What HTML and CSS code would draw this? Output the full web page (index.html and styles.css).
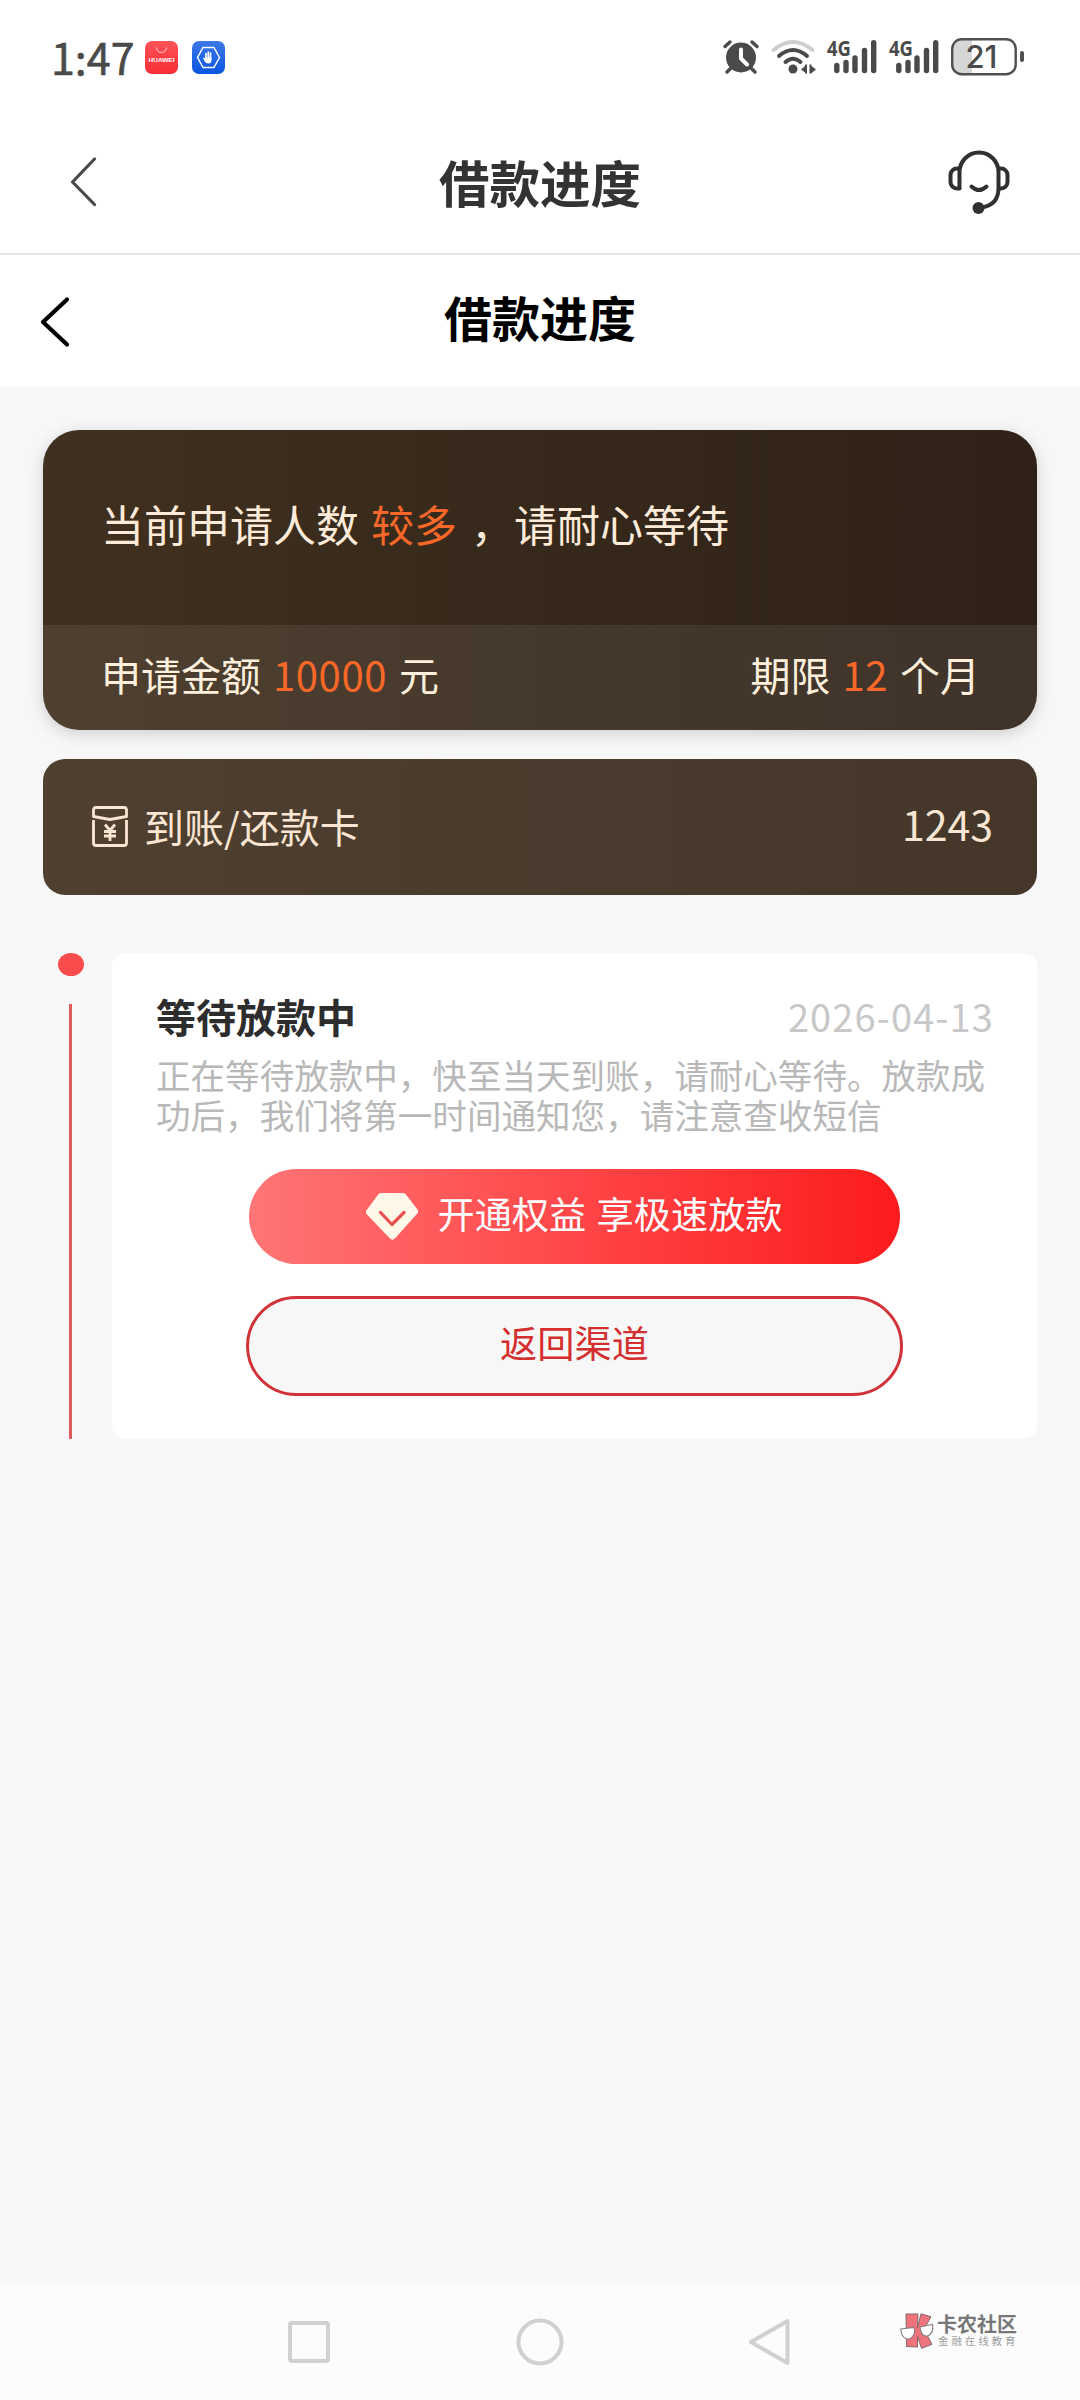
FILE: index.html
```html
<!DOCTYPE html>
<html lang="zh-CN">
<head>
<meta charset="utf-8">
<title>借款进度</title>
<link rel="stylesheet" href="styles.css">
</head>
<body>
<div class="screen">
  <div class="status">
    <span class="clock">1:47</span>
    <svg class="app" viewBox="0 0 33 33"><defs><linearGradient id="r" x2="0" y2="1"><stop stop-color="#fd5458"/><stop offset="1" stop-color="#f92d35"/></linearGradient><linearGradient id="b" x2="0" y2="1"><stop stop-color="#3d78e6"/><stop offset="1" stop-color="#0b55e2"/></linearGradient></defs><rect width="33" height="33" rx="7" fill="url(#r)"/><path d="M11.500 6.500a5 5 0 0 0 10 0" fill="none" stroke="#ffd0d0" stroke-width="1"/><text x="16.500" y="21" text-anchor="middle" class="brand" textLength="26" lengthAdjust="spacingAndGlyphs">HUAWEI</text></svg>
    <svg class="app second" viewBox="0 0 33 33"><rect width="33" height="33" rx="7" fill="url(#b)"/><path d="M11 6.500h11l5.500 10-5.500 10H11l-5.500-10z" fill="none" stroke="#fff" stroke-width="1.500" stroke-linejoin="round"/><path d="M14 18v-5.500M16.300 17v-6M18.500 17.500v-5.500M12 17.500l2.500 3" stroke="#fff" stroke-width="1.700" stroke-linecap="round"/><path d="M13.200 16.500h6.300v3q0 3-3 3t-4.500-3.500z" fill="#fff"/></svg>
    <div class="system">
      <svg class="alarm" viewBox="0 0 36 34"><g stroke="#4a4a4a" stroke-width="3.400" stroke-linecap="round"><path d="M2 6.500L7 2M34 6.500L29 2M8 28l-4 4M28 28l4 4"/></g><circle cx="18" cy="17.500" r="15" fill="#4a4a4a"/><path d="M18 9.500v9l6 6" fill="none" stroke="#fff" stroke-width="4" stroke-linecap="round" stroke-linejoin="round"/></svg>
      <svg class="wifi" viewBox="0 0 45 34"><g fill="none" stroke-width="4" stroke-linecap="round"><path d="M2.500 10Q22-6 41.500 10" stroke="#cfcfcf"/><path d="M8 16q14-12 28 0M14.500 22q7.500-6.500 15 0" stroke="#4a4a4a"/></g><circle cx="22" cy="29" r="4.500" fill="#4a4a4a"/><path d="M30 29.500l4-3.500V24.500h2v9h-2V32.500zM45 29.500l-4.500 3.500v.5h-2v-9h2v1.500z" fill="#4a4a4a"/></svg>
      <svg class="signal" viewBox="0 0 50 34"><text x="0" y="15.500" class="net" textLength="24" lengthAdjust="spacingAndGlyphs">4G</text><path d="M9.800 25.500v5M19 22.500v8M28 18v12.500M37.500 10.500v20M46.700 2.700v27.800" stroke="#4a4a4a" stroke-width="5.400" stroke-linecap="round"/></svg>
      <svg class="signal" viewBox="0 0 50 34"><text x="0" y="15.500" class="net" textLength="24" lengthAdjust="spacingAndGlyphs">4G</text><path d="M9.800 25.500v5M19 22.500v8M28 18v12.500M37.500 10.500v20M46.700 2.700v27.800" stroke="#4a4a4a" stroke-width="5.400" stroke-linecap="round"/></svg>
      <svg class="battery" viewBox="0 0 74 38"><path d="M21 1.500H11A9.500 9.500 0 0 0 1.500 11v15.500a9.500 9.500 0 0 0 9.500 9.500h10z" fill="#d6d6d6"/><rect x="1.200" y="1.200" width="63.500" height="35" rx="9.500" fill="none" stroke="#4f4f4f" stroke-width="2.400"/><rect x="69" y="13" width="4" height="11" rx="2" fill="#4f4f4f"/><text x="30.500" y="30" text-anchor="middle" class="level">21</text></svg>
    </div>
  </div>
  <header class="appbar">
    <svg class="back" viewBox="0 0 27 50"><path d="M24.500 2L2.500 25l22 22.500" fill="none" stroke="#484848" stroke-width="3.200" stroke-linecap="round" stroke-linejoin="round"/></svg>
    <h1>借款进度</h1>
    <svg class="service" viewBox="0 0 62 65"><g fill="none" stroke="#303030" stroke-width="4" stroke-linecap="round"><path d="M11.500 38V22a19.500 19.500 0 0 1 39 0v16q0 17-17 19.500"/><path d="M11.500 38.500H9A6.500 6.500 0 0 1 2.500 32v-7A6.500 6.500 0 0 1 9 18.500h2.500M51 18.500h2a6.500 6.500 0 0 1 6.500 6.500v7a6.500 6.500 0 0 1-6.500 6.500h-2M23.500 36.500q7.500 7 15 0"/></g><circle cx="30.500" cy="58" r="6" fill="#303030"/></svg>
  </header>
  <header class="pagebar">
    <svg class="back" viewBox="0 0 30 50"><path d="M27 2.500L3 25l24 22.500" fill="none" stroke="#000" stroke-width="4.200" stroke-linecap="round" stroke-linejoin="round"/></svg>
    <h2>借款进度</h2>
  </header>
  <main>
    <section class="summary">
      <p class="notice">当前申请人数<em>较多</em><span>，请耐心等待</span></p>
      <div class="terms">
        <p>申请金额<em>10000</em>元</p>
        <p>期限<em>12</em>个月</p>
      </div>
    </section>
    <section class="bank">
      <svg viewBox="0 0 36 41"><g fill="none" stroke="#fbe6d3" stroke-width="2.800" stroke-linejoin="round"><path d="M1.500 10.500V4q0-2.500 2.500-2.500h28q2.500 0 2.500 2.500v6.500l-16.500 3z"/><path d="M1.500 14v23q0 2.500 2.500 2.500h28q2.500 0 2.500-2.500V14"/><path d="M13 18.500l5 6 5-6M18 24.500V35M12 25.500h12M12 30h12"/></g></svg>
      <span>到账/还款卡</span>
      <b>1243</b>
    </section>
    <section class="timeline">
      <div class="rail"><i class="dot"></i><i class="line"></i></div>
      <article>
        <div class="head"><h3>等待放款中</h3><time>2026-04-13</time></div>
        <p>正在等待放款中，快至当天到账，请耐心等待。放款成功后，我们将第一时间通知您，请注意查收短信</p>
        <button class="primary"><svg viewBox="0 0 52 47"><path d="M15 3.500h22L48.500 18.500 26.500 43 3.500 19z" fill="#fff8e8" stroke="#fff8e8" stroke-width="7" stroke-linejoin="round"/><path d="M14.500 19.500L26 31.500l12-12" fill="none" stroke="#e8514e" stroke-width="3.200" stroke-linecap="round" stroke-linejoin="round"/></svg><span>开通权益 享极速放款</span></button>
        <button class="secondary">返回渠道</button>
      </article>
    </section>
  </main>
  <nav>
    <svg viewBox="0 0 50 50"><rect x="6" y="6" width="38" height="38" rx="2" /></svg>
    <svg viewBox="0 0 50 50"><circle cx="25" cy="25" r="21.500"/></svg>
    <svg viewBox="0 0 50 50"><path d="M42.500 4v42L6 25z"/></svg>
  </nav>
  <div class="mark">
    <svg viewBox="0 0 34 36"><g fill="#ee737c" stroke="#85696c" stroke-width="1"><path d="M6 1h12l-.5 14L21 .8l10 3-7 12.500 8 15-10.500 4-4-12V34l-11-.5z"/></g><g fill="#fff" stroke="#8a8080" stroke-width="1.200"><path d="M.8 16l13-1.500q2 4-.5 8t-6 3.500q-6-1-6.500-10zM20 14l12.500-2.500q1.500 9-5 11.500-6.500 1-7.500-9z"/></g></svg>
    <div><strong>卡农社区</strong><small>金融在线教育</small></div>
  </div>
</div>
</body>
</html>
```
FILE: styles.css
```css
* { box-sizing: border-box; margin: 0; padding: 0; }
body { font-family: "Noto Sans CJK SC", sans-serif; background: #f7f7f7; }
svg { display: block; flex: none; overflow: visible; }
em, i { font-style: normal; }
.screen { position: relative; width: 1080px; height: 2400px; display: flex; flex-direction: column; overflow: hidden; background: #f7f7f7; }

.status { height: 110px; padding: 38px 55px 0 51px; display: flex; align-items: flex-start; background: #fff; }
.clock { width: 94px; font-size: 43px; line-height: 36px; color: #4a4a4a; -webkit-text-stroke: .6px #4a4a4a; }
.app { width: 33px; height: 33px; margin-top: 3px; }
.second { margin-left: 14px; }
.brand { font: bold 5.500px "Liberation Sans", sans-serif; fill: #fff; }
.system { margin-left: auto; display: flex; }
.alarm { width: 36px; height: 34px; margin: 2px 12px 0 0; }
.wifi { width: 45px; height: 34px; margin: 2px 11px 0 0; }
.signal { width: 50px; height: 34px; margin: 2px 12px 0 0; }
.battery { width: 74px; height: 38px; }
.net { font: bold 21.500px "Noto Sans", sans-serif; fill: #4a4a4a; }
.level { font: 500 31px Inter, sans-serif; fill: #4a4a4a; }

.appbar { height: 145px; padding: 0 70px; display: flex; align-items: center; justify-content: space-between; background: #fff; border-bottom: 2px solid #e5e5e5; }
.appbar .back { width: 27px; height: 50px; }
.appbar h1 { font-size: 50.500px; line-height: 60px; color: #333; margin-left: 35px; padding-bottom: 1px; }
.service { width: 62px; height: 65px; margin-top: 2px; }
.pagebar { height: 132px; padding: 0 40px; display: flex; align-items: center; background: #fff; }
.pagebar .back { width: 30px; height: 50px; margin-top: 2px; }
.pagebar h2 { flex: 1; margin-right: 30px; padding-bottom: 10px; text-align: center; font-size: 48px; line-height: 60px; color: #000; }

main { flex: 1; padding: 43px 43px 0; }
.summary { height: 300px; border-radius: 36px; overflow: hidden; display: flex; flex-direction: column; background: linear-gradient(90deg, #40301f, #36291b 50%, #2f2118); box-shadow: 0 4px 16px rgba(0,0,0,.16); color: #ffebd9; }
.notice { height: 195px; padding: 60px 58px 0; font-size: 43px; line-height: 66px; white-space: nowrap; }
.notice em { margin: 0 14px 0 12px; }
.summary em { color: #f96828; }
.terms { flex: 1; padding: 0 57px 0 58px; display: flex; justify-content: space-between; line-height: 99px; font-size: 40px; color: #fff0de; background: rgba(255,255,255,.08); }
.terms em { letter-spacing: .6px; margin: 0 12px; }
.bank { height: 136px; margin-top: 29px; padding: 0 44px 0 49px; border-radius: 22px; display: flex; align-items: center; font-size: 40px; line-height: 60px; color: #fbe6d3; background: linear-gradient(90deg, #4f4030, #44372a); }
.bank svg { width: 36px; height: 41px; margin-bottom: 1px; }
.bank span { margin-left: 16px; padding-bottom: 3px; }
.bank b { margin-left: auto; font-weight: 400; font-size: 41px; padding-bottom: 9px; }

.timeline { display: flex; height: 486px; margin-top: 58px; }
.rail { width: 69px; padding-left: 15px; display: flex; flex-direction: column; }
.dot { width: 26px; height: 23px; border-radius: 50%; background: #fa4c4c; }
.line { width: 3px; flex: 1; margin: 28px 0 0 11px; background: #dc5c5c; }
article { flex: 1; padding: 35px 44px 0; border-radius: 14px; background: #fff; display: flex; flex-direction: column; align-items: center; }
.head { width: 100%; height: 66px; display: flex; justify-content: space-between; line-height: 56px; }
h3 { font-size: 40px; color: #2d2d2d; }
time { font-size: 38px; letter-spacing: 1.100px; margin-right: -1px; color: #c8c8c8; }
article p { width: 100%; font-size: 34.560px; line-height: 40px; height: 115px; color: #b8b8b8; white-space: normal; }
button { font: 37.200px/1 "Noto Sans CJK SC", sans-serif; border: 0; flex: none; }
.primary { width: 651px; height: 95px; border-radius: 48px; display: flex; justify-content: center; align-items: center; gap: 19px; color: #fff; background: linear-gradient(90deg, #ff7575, #ff4648 50%, #fc1b1c); }
.primary svg { width: 52px; height: 47px; }
.primary span { padding-bottom: 6px; word-spacing: 2px; }
.secondary { width: 657px; height: 100px; margin-top: 32px; padding-bottom: 6px; border: 3px solid #d03238; border-radius: 50px; color: #d42e2e; background: #f7f7f7; }

nav { height: 117px; padding: 0 285px 0 284px; display: flex; justify-content: space-between; align-items: center; background: #fcfcfc; }
nav svg { width: 50px; height: 50px; fill: none; stroke: #d0d0d0; stroke-width: 4; stroke-linejoin: round; }
.mark { position: absolute; left: 900px; top: 2313px; display: flex; gap: 3px; }
.mark svg { width: 34px; height: 36px; }
.mark div { display: flex; flex-direction: column; }
.mark strong { font-size: 20px; line-height: 21px; color: #777; }
.mark small { margin-top: 1px; font-size: 10.500px; line-height: 12px; letter-spacing: 2.900px; padding-left: 1px; color: #a0a0a0; white-space: nowrap; }
```
